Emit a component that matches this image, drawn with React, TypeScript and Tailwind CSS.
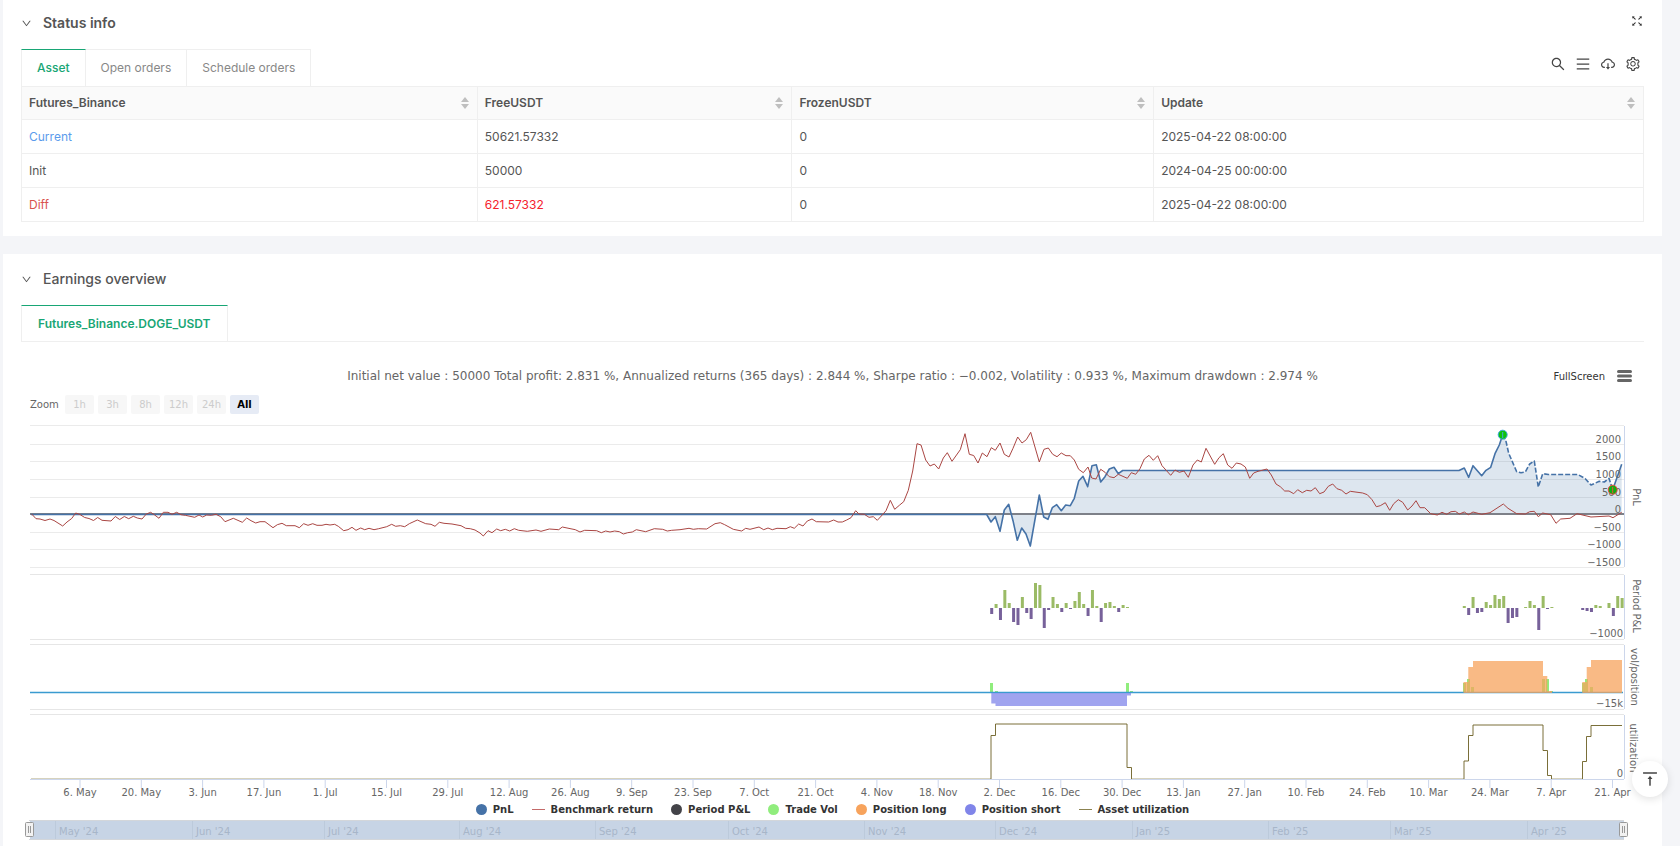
import React, { useState } from 'react';
import {
  AiOutlineCloudDownload,
  AiOutlineDown,
  AiOutlineFullscreen,
  AiOutlineMenu,
  AiOutlineSearch,
  AiOutlineSetting,
  AiOutlineVerticalAlignTop,
} from 'react-icons/ai';

const COLUMNS = [
  { label: 'Futures_Binance', width: 'w-[28.1%]' },
  { label: 'FreeUSDT', width: 'w-[19.4%]' },
  { label: 'FrozenUSDT', width: 'w-[22.3%]' },
  { label: 'Update', width: 'w-[30.2%]' },
];

const ROWS = [
  { name: 'Current', nameCls: 'text-[#5b9bec]', free: '50621.57332', freeCls: '', frozen: '0', update: '2025-04-22 08:00:00' },
  { name: 'Init', nameCls: '', free: '50000', freeCls: '', frozen: '0', update: '2024-04-25 00:00:00' },
  { name: 'Diff', nameCls: 'text-[#d9534f]', free: '621.57332', freeCls: 'text-[#f5222d]', frozen: '0', update: '2025-04-22 08:00:00' },
];

const RANGES = ['1h', '3h', '8h', '12h', '24h', 'All'];

const LEGEND = [
  { label: 'PnL', shape: 'dot', color: '#4572a7' },
  { label: 'Benchmark return', shape: 'line', color: '#c46a69' },
  { label: 'Period P&L', shape: 'dot', color: '#434348' },
  { label: 'Trade Vol', shape: 'dot', color: '#90ed7d' },
  { label: 'Position long', shape: 'dot', color: '#f7a35c' },
  { label: 'Position short', shape: 'dot', color: '#8085e9' },
  { label: 'Asset utilization', shape: 'line', color: '#8b8250' },
];

// Plot area
const LEFT = 30;
const RIGHT = 1624;
const DAY = 4.38;
const ZERO = 514.5;

const PNL_TICKS = [
  { y: 444.5, label: '2000' },
  { y: 461.5, label: '1500' },
  { y: 479.5, label: '1000' },
  { y: 497.5, label: '500' },
  { y: 514.5, label: '0' },
  { y: 532.5, label: '−500' },
  { y: 549.5, label: '−1000' },
  { y: 567.5, label: '−1500' },
];

const DATES = [
  '6. May', '20. May', '3. Jun', '17. Jun', '1. Jul', '15. Jul', '29. Jul', '12. Aug', '26. Aug',
  '9. Sep', '23. Sep', '7. Oct', '21. Oct', '4. Nov', '18. Nov', '2. Dec', '16. Dec', '30. Dec',
  '13. Jan', '27. Jan', '10. Feb', '24. Feb', '10. Mar', '24. Mar', '7. Apr', '21. Apr',
];

const MONTHS = [
  { x: 55, label: "May '24" },
  { x: 192, label: "Jun '24" },
  { x: 324, label: "Jul '24" },
  { x: 459, label: "Aug '24" },
  { x: 595, label: "Sep '24" },
  { x: 728, label: "Oct '24" },
  { x: 864, label: "Nov '24" },
  { x: 995, label: "Dec '24" },
  { x: 1132, label: "Jan '25" },
  { x: 1268, label: "Feb '25" },
  { x: 1390, label: "Mar '25" },
  { x: 1527, label: "Apr '25" },
];

const BENCHMARK =
  '31.7,514 36,518.7 40,519 45,520.5 50,519 54,520.5 62.7,526 67,522 71.7,518.5 75.7,513 80,514.5 84.7,517.5 89,518.5 93.5,520.5 97.7,517.5 102,520.3 111,521 115.3,516.5 119.7,519.5 124.3,516.5 128.7,518.7 133.3,516.3 137.3,518 142,519 146.3,514 150.7,512.3 154.7,515 159,518.3 163.3,512.3 168,512.3 172,514.3 176.7,512.3 181,514.7 185.3,515.3 194.7,517.3 199,515 202.7,517 206.7,515 211.3,515.3 216,514.3 220.7,516.7 225,521.7 233.3,518.3 242.3,522.3 246.7,518 251,520.7 255.7,523 260,521.7 265,521.7 273,527.7 277.3,524.7 282,523.3 286.3,525.7 295,525.7 299.3,527.7 303.7,523.7 308,525.3 312.7,523.7 317,525.3 322,525.3 326,524.3 330,525 334.7,524.3 338.3,526.3 343.7,530.7 348,529.7 352,527.3 356,530.3 360.7,528 364.7,529.7 369,528.3 374,529.7 378.7,528.7 386.7,526.7 391.7,524.3 395.7,526.3 400.3,525.7 404.7,526.7 409.3,523.7 417.3,520 425.7,523.7 431,524.3 435,526.3 439.3,522.3 444,523.3 452,524 461,525.7 465.7,528.3 470.3,528.7 475,530 480,533 483.3,536 488,530.7 492,532.7 496.7,529 500.7,530.7 505.3,529.3 509.7,531 514.3,528.7 518.7,530.3 527.3,531.3 536,530 541,531.3 549.3,529 558.7,529.7 562.3,527 575.3,529.7 580,532 584.7,530.3 596.7,530.7 601.3,532.7 605.7,531 610,532 614.7,531 619.3,531.7 623.3,534 627.7,532.7 632.3,532 636.3,529.7 645.7,531.7 654.3,528.7 662.7,529.3 667.3,531 671.7,530.3 680,529.7 689,528.3 693.3,529.3 698.3,528.7 706.7,529 715,523.7 720.3,522.7 724.7,524.7 733.3,529.3 741.7,531 745.7,528.3 750,529.3 759,527 763.7,529.7 768,528 772.3,529.7 777,528.3 786,528.7 790.3,526.7 794.3,528.3 798.7,524 803,526 807.3,521 812,519 816.3,521.7 828.7,522 833.7,520 838,522 842.3,522 846.7,520 851,517.7 855.7,510.7 859,514 864.3,514.3 869,517.3 873.3,516.7 877.3,520.3 881.3,516 886,510.7 890.3,500.3 894.7,509.3 899.7,505 903.7,501.7 908.3,490.3 912.7,471 917,443.7 921,445 925.7,460 930,466 934.3,464 938.7,469 943.3,458 947.3,452.7 952,461.3 960.3,449.7 965,433.7 969.3,454.3 973.7,455.5 978,463 982.3,453 987,456.7 991.3,447.7 995.3,450.3 1000,443 1004.3,454.3 1009,457 1013,448.3 1017.7,437 1022,443 1026.3,439.7 1030.7,432.3 1039.3,462 1044,449.3 1048.3,448 1052.7,454.3 1057,456.7 1061.3,453 1066,455.7 1070.3,455.7 1074.3,460 1078.7,469.3 1083.3,472.7 1088,467 1091.7,478 1096,479 1100.7,469.3 1105,472.3 1109.3,476.7 1114,477.7 1118.3,474.3 1127.3,478.3 1131.3,472.7 1135.7,474.3 1140,468.7 1144.3,459 1149,455.3 1153.3,460.3 1157.7,455.7 1162,465.7 1170.7,475.3 1175,470 1179.3,472.3 1184,471 1188.3,477.3 1193,465 1197.3,460 1201.3,462 1206,448.3 1214.7,464.3 1219,457.7 1223.3,453.7 1227.7,465 1232,468.3 1236.3,463 1241,464 1245.3,467 1249.7,478.3 1253.7,473 1258,471.3 1267,469 1271.3,475 1276,484 1280.3,486.7 1284.7,491 1289,491 1293.7,493.7 1297.7,489.7 1302.3,492.7 1306.7,490.3 1311,491 1315.3,487.7 1319.7,493.7 1324,492 1328.3,486.3 1332.7,484 1337,488.7 1341.7,490.3 1346,494 1350.3,491.3 1362.7,493 1367.3,494.7 1372,499.7 1376.3,506.7 1380.3,505.7 1385.3,502.7 1389.7,510.3 1393.7,503.7 1398.3,499.7 1402.7,502.3 1407.7,510 1412,506 1416,500.7 1420,507.7 1424.7,507.7 1430.7,513.7 1437.3,515 1442,512.3 1446.7,514.3 1451,511.7 1455.3,511.3 1459.3,514 1464.3,512 1468.3,514.7 1473,512 1481.7,514.3 1490,512.7 1503.3,504 1508,508.3 1516.7,513.7 1525.3,514 1529.7,511.7 1534.3,511.3 1538.3,516.7 1542.7,513 1550.7,514.7 1556,523.3 1560.7,519 1570,518.3 1577,513.7 1591,517 1609,516 1613,517.7 1621.7,512.3';

const PNL =
  '31,514.5 986.7,514.5 991,522 995.3,516.7 1000,531.3 1004.3,510 1008.7,504.3 1013,520.7 1017.3,540.3 1021.7,528 1026,534 1030.3,546 1039.3,495 1043.7,517 1048,519.3 1052.3,507.7 1056.7,504.7 1061.3,510.7 1065.7,505 1070.3,505.7 1074.3,498.3 1078.7,481 1083,476.3 1087.7,486.7 1092,465.7 1096.3,464.7 1100.7,482 1105,476.7 1109.3,469 1114,467.3 1118.3,473.7 1122.7,470.5 1459,470.5 1464.3,468 1468.7,477.3 1473,465.7 1481.7,475.7 1486,470.3 1490.7,467.3 1495,453.7 1499.3,445 1502.7,434.7';

// Maximum drawdown stretch
const DRAWDOWN =
  '1502.7,434.7 1505.7,440 1508.7,453.3 1516.7,471.7 1521,472.7 1525.3,472 1529.7,464 1534.3,461 1538.3,487 1542.7,473.7 1548.3,474.5 1578,474.5 1585.3,478.7 1591,485 1599.3,481.3 1604.3,482 1609,478.3 1612.7,489.7';

const RECOVERY = '1612.7,489.7 1621.7,464.3';

const PERIOD_GROUPS = [
  { x: 991.7, bars: [-6, 4, -12, 18, 5, -14, -17, 11, -5, -11, 25, 23, -20, -2, 11, 4, -4, 5, -1, 7, 16, 4, -8, 18, 2, -14, 5, 6, 2, -4, 3, 1] },
  { x: 1464.3, bars: [2, -7, 11, -5, -4, 6, 3, 13, 9, 12, -15, -10, -9, 0, 1, 7, 3, -22, 12, -1, 1] },
  { x: 1582.7, bars: [-2, -3, -4, 3, 2, 0, 5, -8, 12, 10] },
];

const TRADE_VOL = [
  [990, 683], [995, 691], [1126, 683], [1130, 691],
  [1463, 683], [1467, 679], [1471, 687], [1542, 679], [1546, 679], [1550, 691],
  [1582, 683], [1585, 679], [1590, 687],
];

function SortIcon() {
  return (
    <svg width="8" height="14" viewBox="0 0 8 14" className="shrink-0 fill-[#bfbfbf]">
      <path d="M4 1 8 6H0Z" />
      <path d="M4 13 0 8h8Z" />
    </svg>
  );
}

function SectionTitle({ children, bold }: { children: React.ReactNode; bold?: boolean }) {
  return (
    <div className="flex h-[46px] items-center gap-[11px] text-sm text-[#555]">
      <AiOutlineDown size={11} />
      <h2 className={bold ? 'font-semibold' : 'font-medium'}>{children}</h2>
    </div>
  );
}

function AssetTable() {
  return (
    <table className="w-full table-fixed border-collapse text-xs text-[#555]">
      <thead>
        <tr className="h-[33px] bg-[#fafafa]">
          {COLUMNS.map(col => (
            <th key={col.label} className={`${col.width} border border-[#efefef] pr-2 pl-[7px] text-left font-semibold`}>
              <div className="flex items-center justify-between">
                {col.label}
                <SortIcon />
              </div>
            </th>
          ))}
        </tr>
      </thead>
      <tbody>
        {ROWS.map(row => (
          <tr key={row.name} className="h-[34px]">
            <td className={`border border-[#efefef] px-[7px] ${row.nameCls}`}>{row.name}</td>
            <td className={`border border-[#efefef] px-[7px] ${row.freeCls}`}>{row.free}</td>
            <td className="border border-[#efefef] px-[7px]">{row.frozen}</td>
            <td className="border border-[#efefef] px-[7px]">{row.update}</td>
          </tr>
        ))}
      </tbody>
    </table>
  );
}

function EarningsChart() {
  return (
    <svg viewBox="21 420 1623 380" className="block h-auto w-full" fontSize="10" fill="#666">
      {/* PnL */}
      <path d={`M${LEFT} 425.5H${RIGHT}`} stroke="#ebebeb" />
      {PNL_TICKS.map(tick => (
        <path key={tick.label} d={`M${LEFT} ${tick.y}H${RIGHT}`} stroke="#ebebeb" />
      ))}
      <polygon points={`${PNL} ${DRAWDOWN} ${RECOVERY} 1621.7,${ZERO} 31,${ZERO}`} fill="#4572a7" fillOpacity="0.18" />
      <path d={`M${LEFT} 514H${RIGHT}`} stroke="#7d8088" strokeWidth="2" />
      <g fill="none" stroke="#4572a7" strokeWidth="1.6" strokeLinejoin="round">
        <polyline points={PNL} />
        <polyline points={DRAWDOWN} strokeDasharray="5 2" />
        <polyline points={RECOVERY} />
      </g>
      <polyline points={BENCHMARK} fill="none" stroke="#aa4643" strokeWidth="1" />
      {PNL_TICKS.map(tick => (
        <text key={tick.label} x="1621" y={tick.y - 2} textAnchor="end">{tick.label}</text>
      ))}
      <circle cx="1502.7" cy="434.7" r="4.5" fill="#0cc20c" stroke="#3fa9dc" />
      <path d="M1502.7 432v6" stroke="#3fa9dc" />
      <circle cx="1612.7" cy="489.7" r="4.5" fill="#12ad12" stroke="#f0483c" />
      <path d="M1612.7 487v6" stroke="#f0483c" />
      <path d="M1624.5 426V567M1624.5 575V639M1624.5 645V709M1624.5 715V779" stroke="#ccd6eb" />

      {/* Period P&L */}
      <path d={`M${LEFT} 574.5H${RIGHT}M${LEFT} 639.5H${RIGHT}`} stroke="#e6e6e6" />
      {PERIOD_GROUPS.map(group =>
        group.bars.map((h, i) => (
          <rect
            key={`${group.x}-${i}`}
            x={group.x + i * DAY - 1.5}
            y={h > 0 ? 608 - h : 608}
            width="3"
            height={Math.abs(h)}
            fill={h > 0 ? '#9bbb66' : '#77619a'}
          />
        )),
      )}
      <text x="1623" y="637" textAnchor="end">−1000</text>

      {/* Volume and position */}
      <path d={`M${LEFT} 644.5H${RIGHT}M${LEFT} 709.5H${RIGHT}`} stroke="#e6e6e6" />
      {TRADE_VOL.map(([x, y]) => (
        <rect key={x} x={x} y={y} width="3" height={693 - y} fill="#90ed7d" />
      ))}
      <path d={`M${LEFT} 692.5H1623`} stroke="#3a9bd0" strokeWidth="1.6" />
      <path d="M991.3 693V703.5H995.5V706H1127V695.5H1131V693Z" fill="#8085e9" fillOpacity="0.75" />
      <path
        d="M1463.5 693V682H1468.3V667H1473V661H1543V676H1547.3V691H1552V693ZM1582.3 693V682H1586.7V667H1591V660H1622V693Z"
        fill="#f7a35c"
        fillOpacity="0.75"
      />
      <text x="1623" y="707" textAnchor="end">−15k</text>

      {/* Utilization */}
      <path d={`M${LEFT} 714.5H${RIGHT}`} stroke="#e6e6e6" />
      <path d={`M${LEFT} 779.5H${RIGHT}`} stroke="#ccd6eb" />
      <path d="M31 778.5H991M1132 778.5H1464M1552 778.5H1582" stroke="#d6d2bd" />
      <path
        d="M991 779V735.5H995.5V724H1127V767.5H1131.5V779M1464 779V761H1468.5V735.5H1473V725H1543V750.5H1547.5V775.5H1551.5V779M1582.5 779V761.5H1586.5V736.5H1591V725.5H1622"
        fill="none"
        stroke="#6b5f23"
        strokeWidth="0.9"
      />
      <text x="1623" y="777" textAnchor="end">0</text>

      {DATES.map((date, i) => {
        const x = 80 + i * 61.3;
        return (
          <g key={date}>
            <path d={`M${x} 780V788`} stroke="#ccd6eb" />
            <text x={x} y="796" textAnchor="middle">{date}</text>
          </g>
        );
      })}

      <g textAnchor="middle">
        <text transform="translate(1633 497) rotate(90)">PnL</text>
        <text transform="translate(1633 606) rotate(90)">Period P&amp;L</text>
        <text transform="translate(1631 677) rotate(90)">vol/position</text>
        <text transform="translate(1630 748) rotate(90)">utilization</text>
      </g>
    </svg>
  );
}

function Navigator() {
  return (
    <svg viewBox="21 818 1623 24" className="block h-auto w-full" fontSize="10">
      <rect x="30" y="820" width="1594" height="20" fill="#c7d4e5" />
      <path d="M29 820.5H1624M29 839.5H1624" stroke="#d3d6da" />
      {MONTHS.map(month => (
        <g key={month.label}>
          <path d={`M${month.x + 0.5} 821V839`} stroke="#bccadb" />
          <text x={month.x + 4} y="835" fill="#a7b6c9">{month.label}</text>
        </g>
      ))}
      {[30, 1624].map(x => (
        <g key={x}>
          <rect x={x - 4.5} y="822.5" width="8" height="14" rx="1" fill="#f2f2f2" stroke="#999" />
          <path d={`M${x - 1.5} 826V833M${x + 0.5} 826V833`} stroke="#999" />
        </g>
      ))}
    </svg>
  );
}

export default function App() {
  const [tab, setTab] = useState('Asset');

  return (
    <div className="flex min-h-screen flex-col gap-[18px] bg-[#f4f5f8] pr-[18px] pl-[3px] font-['Inter',sans-serif]">
      {/* Status info */}
      <section className="bg-white px-[18px] pb-[14px]">
        <div className="mb-[3px] flex items-center justify-between">
          <SectionTitle bold>Status info</SectionTitle>
          <button aria-label="Toggle full screen" className="pb-1 text-[#333]">
            <AiOutlineFullscreen size={14} />
          </button>
        </div>
        <div className="flex justify-between">
          <div className="flex h-[37px] text-xs">
            {['Asset', 'Open orders', 'Schedule orders'].map((name, i) => (
              <button
                key={name}
                onClick={() => setTab(name)}
                className={`border-t border-r px-[15px] ${i === 0 ? 'border-l' : ''} ${
                  tab === name
                    ? 'border-[#efefef] border-t-[#18a675] font-medium text-[#18a675]'
                    : 'border-[#efefef] text-[#888]'
                }`}
              >
                {name}
              </button>
            ))}
          </div>
          <div className="flex h-[30px] items-center gap-[9px] pr-[3px] text-[#444]">
            <button aria-label="Search"><AiOutlineSearch size={16} /></button>
            <button aria-label="Columns"><AiOutlineMenu size={16} /></button>
            <button aria-label="Download"><AiOutlineCloudDownload size={16} /></button>
            <button aria-label="Settings"><AiOutlineSetting size={16} /></button>
          </div>
        </div>
        <AssetTable />
      </section>

      {/* Earnings overview */}
      <section className="flex-1 bg-white px-[18px] pt-[2px]">
        <div className="mb-[3px]">
          <SectionTitle>Earnings overview</SectionTitle>
        </div>
        <div className="flex h-[37px] border-b border-[#efefef] text-xs">
          <button className="border-x border-t border-[#efefef] border-t-[#18a675] px-4 font-semibold text-[#18a675]">
            Futures_Binance.DOGE_USDT
          </button>
        </div>

        <div className="font-['DejaVu_Sans',sans-serif] text-[10px]">
          <div className="mt-6 grid h-5 grid-cols-[1fr_auto_1fr] items-center">
            <h3 className="col-start-2 text-xs text-[#666]">
              Initial net value : 50000 Total profit: 2.831 %, Annualized returns (365 days) : 2.844 %, Sharpe ratio : −0.002, Volatility : 0.933 %, Maximum drawdown : 2.974 %
            </h3>
            <div className="flex items-center justify-end gap-3 pr-3 text-[#333]">
              <button>FullScreen</button>
              <button aria-label="Chart menu">
                <svg width="15" height="12" viewBox="0 0 15 12" stroke="#666" strokeWidth="3" strokeLinecap="round">
                  <path d="M1.5 1.5H13.5M1.5 6H13.5M1.5 10.5H13.5" />
                </svg>
              </button>
            </div>
          </div>

          <div className="mt-[9px] mb-[6px] flex items-center gap-1 pl-[9px] text-[#666]">
            <span className="w-[31px]">Zoom</span>
            {RANGES.map(range => (
              <button
                key={range}
                disabled={range !== 'All'}
                className={`h-[19px] w-[29px] rounded-[2px] ${
                  range === 'All' ? 'bg-[#e6ebf5] font-bold text-black' : 'bg-[#f7f7f7] text-[#ccc]'
                }`}
              >
                {range}
              </button>
            ))}
          </div>

          <EarningsChart />

          <div className="flex h-[18px] items-center justify-center gap-[18px] font-bold text-[#333]">
            {LEGEND.map(item => (
              <button key={item.label} className="flex items-center gap-[6px]">
                {item.shape === 'dot' ? (
                  <span className="size-[11px] rounded-full" style={{ backgroundColor: item.color }} />
                ) : (
                  <span className="h-px w-[13px]" style={{ backgroundColor: item.color }} />
                )}
                {item.label}
              </button>
            ))}
          </div>

          <Navigator />
        </div>
      </section>

      <button
        aria-label="Back to top"
        onClick={() => window.scrollTo({ top: 0 })}
        className="fixed right-3 bottom-[49px] flex size-9 items-center justify-center rounded-full bg-white text-[#444] shadow-[0_2px_8px_rgba(0,0,0,0.12)]"
      >
        <AiOutlineVerticalAlignTop size={20} />
      </button>
    </div>
  );
}
